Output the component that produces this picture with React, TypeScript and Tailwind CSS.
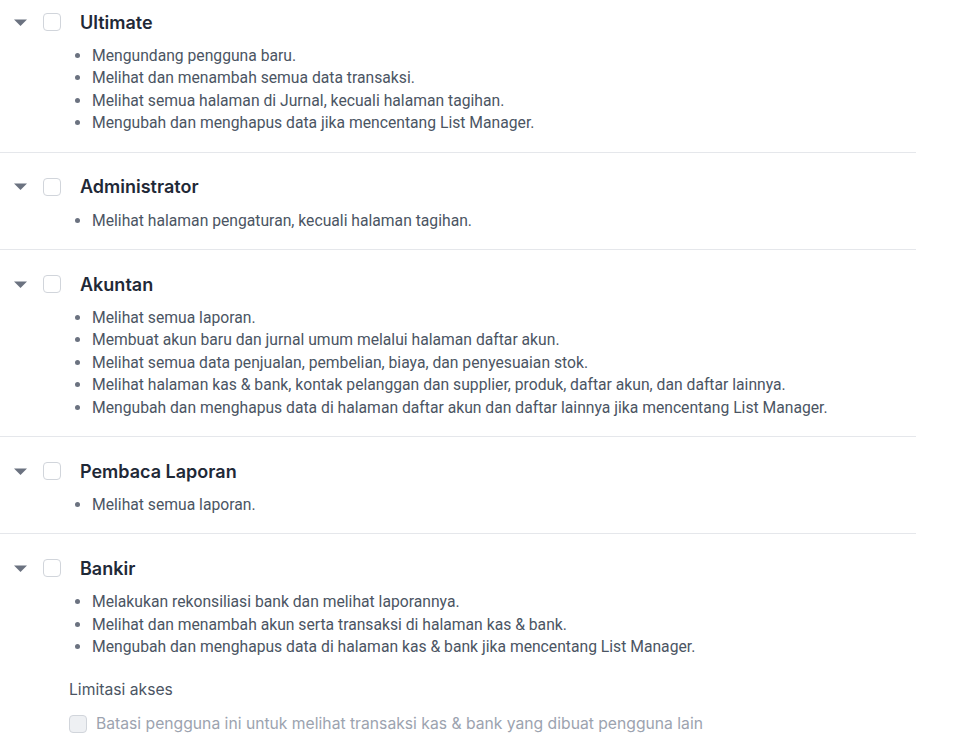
const ROLES = [
  {
    name: "Ultimate",
    items: [
      "Mengundang pengguna baru.",
      "Melihat dan menambah semua data transaksi.",
      "Melihat semua halaman di Jurnal, kecuali halaman tagihan.",
      "Mengubah dan menghapus data jika mencentang List Manager.",
    ],
  },
  {
    name: "Administrator",
    items: ["Melihat halaman pengaturan, kecuali halaman tagihan."],
  },
  {
    name: "Akuntan",
    items: [
      "Melihat semua laporan.",
      "Membuat akun baru dan jurnal umum melalui halaman daftar akun.",
      "Melihat semua data penjualan, pembelian, biaya, dan penyesuaian stok.",
      "Melihat halaman kas & bank, kontak pelanggan dan supplier, produk, daftar akun, dan daftar lainnya.",
      "Mengubah dan menghapus data di halaman daftar akun dan daftar lainnya jika mencentang List Manager.",
    ],
  },
  {
    name: "Pembaca Laporan",
    items: ["Melihat semua laporan."],
  },
  {
    name: "Bankir",
    items: [
      "Melakukan rekonsiliasi bank dan melihat laporannya.",
      "Melihat dan menambah akun serta transaksi di halaman kas & bank.",
      "Mengubah dan menghapus data di halaman kas & bank jika mencentang List Manager.",
    ],
    limit: true,
  },
];

function Caret() {
  return (
    <svg width="13" height="7" viewBox="0 0 13 7" className="shrink-0">
      <path d="M0 0.5 L13 0.5 L6.5 7 Z" fill="#6b7280" />
    </svg>
  );
}

export default function App() {
  return (
    <div className="min-h-screen bg-white font-['Inter',sans-serif] w-[916px]">
      {ROLES.map((r, i) => (
        <div
          key={r.name}
          className={`pb-[17px] ${i === 0 ? "pt-[8px]" : "pt-[20px]"} ${i < ROLES.length - 1 ? "border-b border-[#e5e7eb]" : ""}`}
        >
          <div className="flex items-center h-7">
            <div className="w-[43px] pl-[14px] flex items-center">
              <Caret />
            </div>
            <span className="w-[18px] h-[18px] rounded-[4px] border border-[#d1d5db] bg-white shrink-0" />
            <span className="ml-[19px] text-[18px] font-semibold text-[#1f2937]">{r.name}</span>
          </div>
          <ul className="mt-[9px] pl-[92px] list-disc marker:text-[#6b7280] font-['Roboto',sans-serif] text-[15.7px] leading-[22.4px] text-[#4b5563]">
            {r.items.map((t) => (
              <li key={t}>{t}</li>
            ))}
          </ul>
          {r.limit && (
            <div className="pl-[69px] mt-[19px]">
              <div className="text-[15.7px] text-[#4b5563] leading-[24px]">Limitasi akses</div>
              <label className="mt-[10px] flex items-center gap-[9px]">
                <span className="w-[18px] h-[18px] rounded-[4px] border border-[#d1d5db] bg-[#eef0f3] shrink-0" />
                <span className="text-[15.7px] text-[#9ca3af] leading-[24px]">
                  Batasi pengguna ini untuk melihat transaksi kas &amp; bank yang dibuat pengguna lain
                </span>
              </label>
            </div>
          )}
        </div>
      ))}
    </div>
  );
}
